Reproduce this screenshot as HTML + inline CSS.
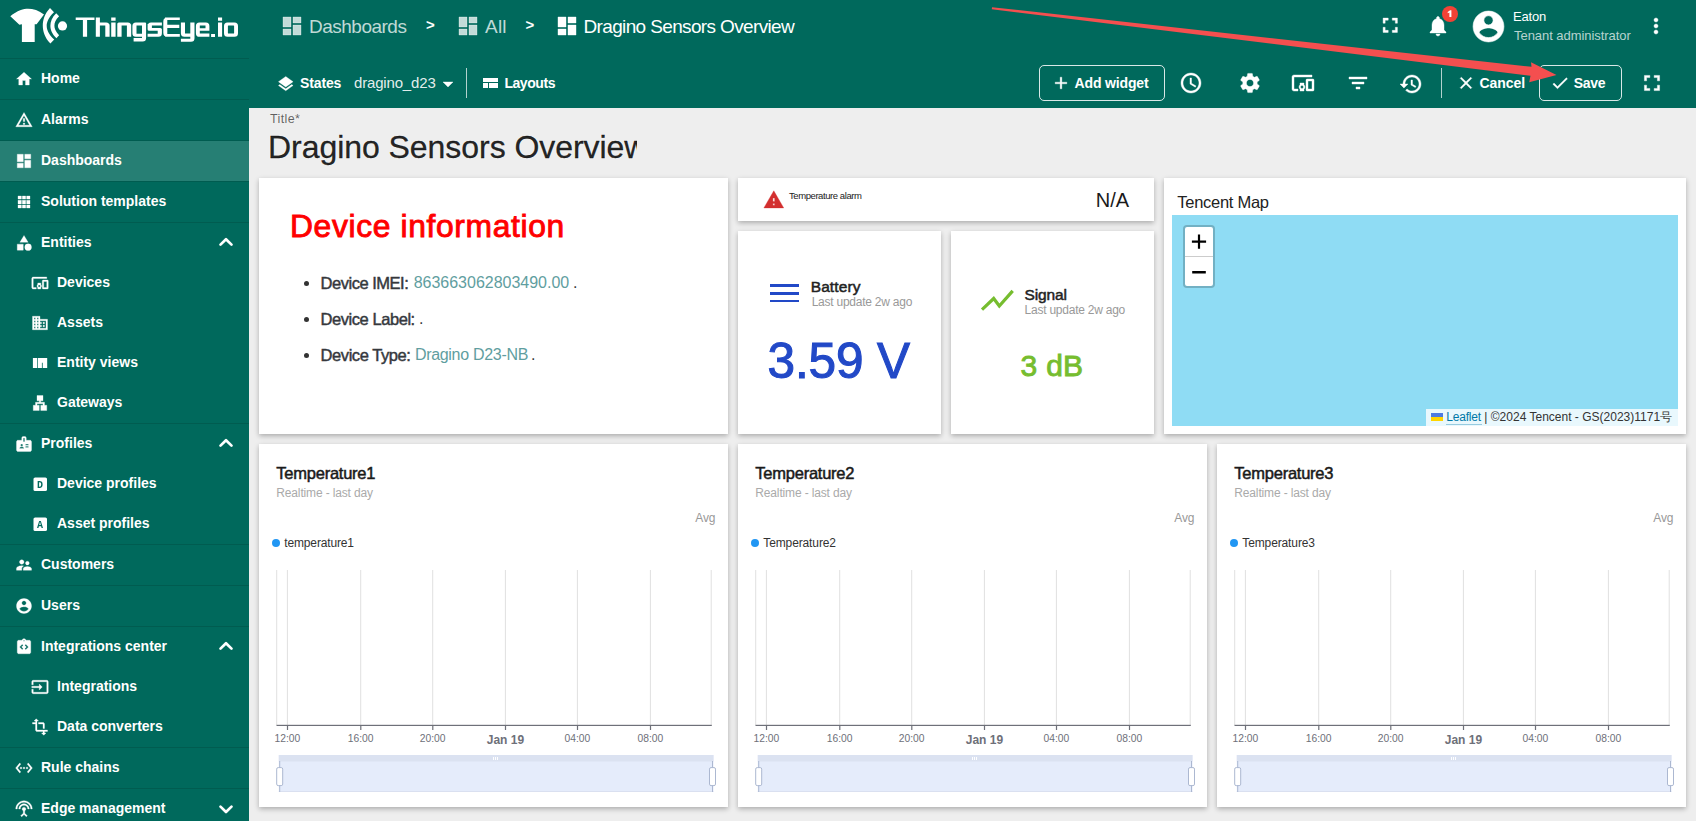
<!DOCTYPE html>
<html><head><meta charset="utf-8"><style>
html,body{margin:0;padding:0;width:1696px;height:821px;overflow:hidden;background:#eee}
body{position:relative;font-family:"Liberation Sans", sans-serif}
.t{position:absolute;white-space:nowrap;line-height:1}
.t.c{text-align:center}
.r{position:absolute;box-sizing:content-box}
.i{position:absolute;overflow:visible}
</style></head><body>
<div class="r" style="left:0px;top:0px;width:1696px;height:108px;background:#00695c;"></div>
<div class="r" style="left:0px;top:108px;width:249px;height:713px;background:#00695c;"></div>
<div class="r" style="left:249px;top:108px;width:1447px;height:713px;background:#eeeeee;"></div>
<svg class="i" style="left:8px;top:6px;width:62px;height:40px" viewBox="8 6 62 40">
<path fill="#fff" d="M10.3 16.3 C17 10.5 24 8.8 28 8.8 C33 8.8 39 10.5 44 14.6 L36.6 24.3 L34.7 24.3 L34.7 42.1 L21.9 42.1 L21.9 24.3 L19.4 24.8 Z"/>
<path fill="#fff" d="M50 8.1 L54 12.3 C48 18 46.7 23 46.7 25.8 C46.7 29 48 34 54.2 39.6 L50.4 43.6 C44.5 37.5 42.8 31 42.8 25.8 C42.8 20 44.8 13.8 50 8.1 Z"/>
<path fill="#fff" d="M56.2 13.3 L59.1 16.3 C55.5 19.8 54.4 23 54.4 25.8 C54.4 28.5 55.5 31.5 59.1 35.3 L56.4 38.2 C51.8 33.8 50.4 29.5 50.4 25.8 C50.4 21.8 52 17.3 56.2 13.3 Z"/>
<circle fill="#fff" cx="62.5" cy="25.9" r="4.6"/>
</svg>
<svg class="i" style="left:0;top:0;width:250px;height:58px" viewBox="0 0 250 58"><path fill="#fff" d="M75.70 17.40H94.50V20.10H75.70V17.40Z M82.90 19.90H87.10V36.85H82.90V19.90Z M95.80 17.40H99.90V36.85H95.80V17.40Z M99.50 22.50H106.10A3.5 3.5 0 0 1 109.60 26.00V25.40H99.50V22.50Z M105.30 24.50H109.60V36.85H105.30V24.50Z M111.20 17.40H115.60V20.80H111.20V17.40Z M111.20 22.50H115.60V36.85H111.20V22.50Z M118.80 22.50H127.70A3.5 3.5 0 0 1 131.20 26.00V25.40H117.30V24.00A1.5 1.5 0 0 1 118.80 22.50Z M117.30 23.50H121.60V36.85H117.30V23.50Z M126.90 24.50H131.20V36.85H126.90V24.50Z M135.90 22.50H145.10A1 1 0 0 1 146.10 23.50V36.85H135.90A3.5 3.5 0 0 1 132.40 33.35V26.00A3.5 3.5 0 0 1 135.90 22.50ZM136.50 25.40V33.70H142.00V25.40H136.50Z M142.00 24.50H146.10V38.10A3.5 3.5 0 0 1 142.60 41.60H142.00V24.50Z M133.60 37.90H144.00V41.60H133.60V37.90Z M151.10 22.50H161.90V25.40H147.60V26.00A3.5 3.5 0 0 1 151.10 22.50Z M147.60 24.00H151.90V30.70H149.10A1.5 1.5 0 0 1 147.60 29.20V24.00Z M149.50 27.90H160.40A1.5 1.5 0 0 1 161.90 29.40V30.70H149.50V27.90Z M157.70 29.00H161.90V33.35A3.5 3.5 0 0 1 158.40 36.85H157.70V29.00Z M147.60 33.80H159.50V36.85H147.60V33.80Z M167.30 17.40H167.30V36.85H167.30A4 4 0 0 1 163.30 32.85V21.40A4 4 0 0 1 167.30 17.40Z M165.00 17.40H179.80V20.10H165.00V17.40Z M165.00 24.70H179.30V27.90H165.00V24.70Z M165.00 33.90H179.80V36.85H165.00V33.90Z M180.90 22.50H185.00V36.85H184.40A3.5 3.5 0 0 1 180.90 33.35V22.50Z M183.00 33.50H192.00V36.85H183.00V33.50Z M190.30 22.50H194.50V38.30A3.5 3.5 0 0 1 191.00 41.80H190.30V22.50Z M180.90 38.70H192.00V41.80H180.90V38.70Z M199.40 22.50H205.90A3.5 3.5 0 0 1 209.40 26.00V30.80H195.90V26.00A3.5 3.5 0 0 1 199.40 22.50ZM199.80 25.40V28.20H205.50V25.40H199.80Z M195.90 29.00H199.80V36.85H199.40A3.5 3.5 0 0 1 195.90 33.35V29.00Z M197.50 33.40H209.40V36.85H197.50V33.40Z M211.10 34.10H215.00V37.05H211.10V34.10Z M218.00 17.40H222.10V20.80H218.00V17.40Z M218.00 22.50H222.10V36.85H218.00V22.50Z M227.50 22.50H234.50A3.5 3.5 0 0 1 238.00 26.00V33.35A3.5 3.5 0 0 1 234.50 36.85H227.50A3.5 3.5 0 0 1 224.00 33.35V26.00A3.5 3.5 0 0 1 227.50 22.50ZM227.90 26.00V33.00A0.5 0.5 0 0 0 228.40 33.50H233.60A0.5 0.5 0 0 0 234.10 33.00V26.00A0.5 0.5 0 0 0 233.60 25.50H228.40A0.5 0.5 0 0 0 227.90 26.00Z"/></svg>
<svg class="i" style="left:280.3px;top:14px;width:24px;height:24px;" viewBox="0 0 24 24"><path fill="rgba(255,255,255,0.76)" stroke="rgba(255,255,255,0.76)" stroke-width="0.4" d="M3 13h8V3H3v10zm0 8h8v-6H3v6zm10 0h8V11h-8v10zm0-18v6h8V3h-8z"/></svg>
<div class="t" style="left:309.00px;top:16.91px;font-size:19px;color:rgba(255,255,255,0.76);font-weight:400;letter-spacing:-0.506px;">Dashboards</div>
<div class="t" style="left:425.95px;top:17.30px;font-size:15px;color:#fff;font-weight:700;">&gt;</div>
<svg class="i" style="left:456px;top:14px;width:24px;height:24px;" viewBox="0 0 24 24"><path fill="rgba(255,255,255,0.76)" stroke="rgba(255,255,255,0.76)" stroke-width="0.4" d="M3 13h8V3H3v10zm0 8h8v-6H3v6zm10 0h8V11h-8v10zm0-18v6h8V3h-8z"/></svg>
<div class="t" style="left:485.00px;top:16.91px;font-size:19px;color:rgba(255,255,255,0.76);font-weight:400;letter-spacing:0.203px;">All</div>
<div class="t" style="left:525.45px;top:17.30px;font-size:15px;color:#fff;font-weight:700;">&gt;</div>
<svg class="i" style="left:555px;top:14px;width:24px;height:24px;" viewBox="0 0 24 24"><path fill="#fff" stroke="#fff" stroke-width="0.4" d="M3 13h8V3H3v10zm0 8h8v-6H3v6zm10 0h8V11h-8v10zm0-18v6h8V3h-8z"/></svg>
<div class="t" style="left:583.50px;top:16.91px;font-size:19px;color:#fff;font-weight:400;letter-spacing:-0.642px;">Dragino Sensors Overview</div>
<svg class="i" style="left:1377.8px;top:13.3px;width:24.5px;height:24.5px;" viewBox="0 0 24 24"><path fill="#fff" stroke="#fff" stroke-width="0.4" d="M7 14H5v5h5v-2H7v-3zm-2-4h2V7h3V5H5v5zm12 7h-3v2h5v-5h-2v3zM14 5v2h3v3h2V5h-5z"/></svg>
<svg class="i" style="left:1426px;top:14px;width:24px;height:24px;" viewBox="0 0 24 24"><path fill="#fff" stroke="#fff" stroke-width="0.4" d="M12 22c1.1 0 2-.9 2-2h-4c0 1.1.89 2 2 2zm6-6v-5c0-3.07-1.64-5.64-4.5-6.32V4c0-.83-.67-1.5-1.5-1.5s-1.5.67-1.5 1.5v.68C7.63 5.36 6 7.92 6 11v5l-2 2v1h16v-1l-2-2z"/></svg>
<div class="r" style="left:1442px;top:6px;width:16px;height:16px;border-radius:50%;background:#f24236"></div>
<svg class="i" style="left:0;top:0;width:1696px;height:58px" viewBox="0 0 1696 58"><path fill="#fff" d="M1447.7 11.9L1450.1 10.3H1451.4V17.1H1449.4V12.4L1447.7 13.3Z"/></svg>
<svg class="i" style="left:1469.5px;top:7.5px;width:37px;height:37px;" viewBox="0 0 24 24"><path fill="#fff" stroke="#fff" stroke-width="0.4" d="M12 2C6.48 2 2 6.48 2 12s4.48 10 10 10 10-4.48 10-10S17.52 2 12 2zm0 3c1.66 0 3 1.34 3 3s-1.34 3-3 3-3-1.34-3-3 1.34-3 3-3zm0 14.2c-2.5 0-4.71-1.28-6-3.22.03-1.99 4-3.08 6-3.08 1.99 0 5.97 1.09 6 3.08-1.29 1.94-3.5 3.22-6 3.22z"/></svg>
<div class="t" style="left:1513.00px;top:9.99px;font-size:13px;color:#fff;font-weight:400;letter-spacing:-0.186px;">Eaton</div>
<div class="t" style="left:1514.00px;top:28.99px;font-size:13px;color:rgba(255,255,255,0.72);font-weight:400;letter-spacing:-0.050px;">Tenant administrator</div>
<svg class="i" style="left:1644px;top:14px;width:24px;height:24px;" viewBox="0 0 24 24"><path fill="#fff" stroke="#fff" stroke-width="0.4" d="M12 8c1.1 0 2-.9 2-2s-.9-2-2-2-2 .9-2 2 .9 2 2 2zm0 2c-1.1 0-2 .9-2 2s.9 2 2 2 2-.9 2-2-.9-2-2-2zm0 6c-1.1 0-2 .9-2 2s.9 2 2 2 2-.9 2-2-.9-2-2-2z"/></svg>
<svg class="i" style="left:276px;top:74.6px;width:19.5px;height:19.5px;transform:scaleY(0.92);transform-origin:50% 0" viewBox="0 0 24 24"><path fill="#fff" stroke="#fff" stroke-width="0.4" d="M11.99 18.54l-7.37-5.73L3 14.07l9 7 9-7-1.63-1.27-7.38 5.74zM12 16l7.36-5.73L21 9l-9-7-9 7 1.63 1.27L12 16z"/></svg>
<div class="t" style="left:300.00px;top:76.14px;font-size:14px;color:#fff;font-weight:700;letter-spacing:-0.127px;">States</div>
<div class="t" style="left:354.00px;top:75.30px;font-size:15px;color:rgba(255,255,255,0.9);font-weight:400;letter-spacing:-0.167px;">dragino_d23</div>
<svg class="i" style="left:436.4px;top:71.8px;width:24px;height:24px;" viewBox="0 0 24 24"><path fill="#fff" stroke="#fff" stroke-width="0.4" d="M7 10l5 5 5-5z"/></svg>
<div class="r" style="left:466px;top:68px;width:1px;height:30px;background:rgba(255,255,255,0.7);"></div>
<div class="r" style="left:483px;top:78px;width:15px;height:3.8px;background:#fff;"></div>
<div class="r" style="left:483px;top:83.2px;width:5px;height:4.7px;background:#fff;"></div>
<div class="r" style="left:488.8px;top:83.2px;width:9.2px;height:4.7px;background:#fff;"></div>
<div class="t" style="left:504.40px;top:76.14px;font-size:14px;color:#fff;font-weight:700;letter-spacing:-0.432px;">Layouts</div>
<div class="r" style="left:1039px;top:65px;width:124px;height:34px;border:1px solid rgba(255,255,255,0.85);border-radius:5px"></div>
<svg class="i" style="left:1050.5px;top:73px;width:20px;height:20px;" viewBox="0 0 24 24"><path fill="#fff" stroke="#fff" stroke-width="0.4" d="M19 13h-6v6h-2v-6H5v-2h6V5h2v6h6v2z"/></svg>
<div class="t" style="left:1074.60px;top:76.14px;font-size:14px;color:#fff;font-weight:700;letter-spacing:-0.164px;">Add widget</div>
<svg class="i" style="left:1179.3px;top:71px;width:24px;height:24px;" viewBox="0 0 24 24"><path fill="#fff" stroke="#fff" stroke-width="0.4" d="M11.99 2C6.47 2 2 6.48 2 12s4.47 10 9.99 10C17.52 22 22 17.52 22 12S17.52 2 11.99 2zM12 20c-4.42 0-8-3.58-8-8s3.58-8 8-8 8 3.58 8 8-3.58 8-8 8zm.5-13H11v6l5.25 3.15.75-1.23-4.5-2.67z"/></svg>
<svg class="i" style="left:1237.5px;top:71px;width:24px;height:24px;" viewBox="0 0 24 24"><path fill="#fff" stroke="#fff" stroke-width="0.4" d="M19.14 12.94c.04-.3.06-.61.06-.94 0-.32-.02-.64-.07-.94l2.03-1.58c.18-.14.23-.41.12-.61l-1.92-3.32c-.12-.22-.37-.29-.59-.22l-2.39.96c-.5-.38-1.03-.7-1.62-.94l-.36-2.54c-.04-.24-.24-.41-.48-.41h-3.84c-.24 0-.43.17-.47.41l-.36 2.54c-.59.24-1.13.57-1.62.94l-2.39-.96c-.22-.08-.47 0-.59.22L2.74 8.87c-.12.21-.08.47.12.61l2.03 1.58c-.05.3-.09.63-.09.94s.02.64.07.94l-2.03 1.58c-.18.14-.23.41-.12.61l1.92 3.32c.12.22.37.29.59.22l2.39-.96c.5.38 1.03.7 1.62.94l.36 2.54c.05.24.24.41.48.41h3.84c.24 0 .44-.17.47-.41l.36-2.54c.59-.24 1.13-.56 1.62-.94l2.39.96c.22.08.47 0 .59-.22l1.92-3.32c.12-.22.07-.47-.12-.61l-2.01-1.58zM12 15.6c-1.98 0-3.6-1.62-3.6-3.6s1.62-3.6 3.6-3.6 3.6 1.62 3.6 3.6-1.62 3.6-3.6 3.6z"/></svg>
<svg class="i" style="left:1291px;top:71px;width:24px;height:24px;" viewBox="0 0 24 24"><path fill="#fff" stroke="#fff" stroke-width="0.4" d="M3 6h18V4H3c-1.1 0-2 .9-2 2v12c0 1.1.9 2 2 2h4v-2H3V6zm10 6H9v1.78c-.61.55-1 1.33-1 2.22s.39 1.67 1 2.22V20h4v-1.78c.61-.55 1-1.34 1-2.22s-.39-1.67-1-2.22V12zm-2 5.5c-.83 0-1.5-.67-1.5-1.5s.67-1.5 1.5-1.5 1.5.67 1.5 1.5-.67 1.5-1.5 1.5zM22 8h-6c-.5 0-1 .5-1 1v10c0 .5.5 1 1 1h6c.5 0 1-.5 1-1V9c0-.5-.5-1-1-1zm-1 10h-4v-8h4v8z"/></svg>
<svg class="i" style="left:1345.5px;top:71px;width:24px;height:24px;" viewBox="0 0 24 24"><path fill="#fff" stroke="#fff" stroke-width="0.4" d="M10 18h4v-2h-4v2zM3 6v2h18V6H3zm3 7h12v-2H6v2z"/></svg>
<svg class="i" style="left:1398.8px;top:71.5px;width:24px;height:24px;" viewBox="0 0 24 24"><path fill="#fff" stroke="#fff" stroke-width="0.4" d="M13 3c-4.97 0-9 4.03-9 9H1l3.89 3.89.07.14L9 12H6c0-3.87 3.13-7 7-7s7 3.13 7 7-3.13 7-7 7c-1.93 0-3.68-.79-4.94-2.06l-1.42 1.42C8.27 19.99 10.51 21 13 21c4.97 0 9-4.03 9-9s-4.03-9-9-9zm-1 5v5l4.28 2.54.72-1.21-3.5-2.08V8H12z"/></svg>
<div class="r" style="left:1441px;top:68px;width:1px;height:30px;background:rgba(255,255,255,0.7);"></div>
<svg class="i" style="left:1455.5px;top:73px;width:20px;height:20px;" viewBox="0 0 24 24"><path fill="#fff" stroke="#fff" stroke-width="0.4" d="M19 6.41L17.59 5 12 10.59 6.41 5 5 6.41 10.59 12 5 17.59 6.41 19 12 13.41 17.59 19 19 17.59 13.41 12z"/></svg>
<div class="t" style="left:1479.50px;top:76.14px;font-size:14px;color:#fff;font-weight:700;letter-spacing:-0.064px;">Cancel</div>
<div class="r" style="left:1539px;top:65px;width:81px;height:34px;border:1px solid rgba(255,255,255,0.85);border-radius:5px"></div>
<svg class="i" style="left:1550px;top:73px;width:20px;height:20px;" viewBox="0 0 24 24"><path fill="#fff" stroke="#fff" stroke-width="0.4" d="M9 16.17L4.83 12l-1.42 1.41L9 19 21 7l-1.41-1.41z"/></svg>
<div class="t" style="left:1573.80px;top:76.14px;font-size:14px;color:#fff;font-weight:700;letter-spacing:-0.303px;">Save</div>
<svg class="i" style="left:1639px;top:70px;width:26px;height:26px;" viewBox="0 0 24 24"><path fill="#fff" stroke="#fff" stroke-width="0.4" d="M7 14H5v5h5v-2H7v-3zm-2-4h2V7h3V5H5v5zm12 7h-3v2h5v-5h-2v3zM14 5v2h3v3h2V5h-5z"/></svg>
<div class="t" style="left:270.00px;top:112.61px;font-size:12.5px;color:rgba(0,0,0,0.6);font-weight:400;letter-spacing:0.370px;">Title*</div>
<div class="r" style="left:260px;top:122px;width:377px;height:48px;overflow:hidden">
<div class="t" style="left:8.00px;top:8.50px;font-size:32px;color:rgba(0,0,0,0.87);font-weight:400;-webkit-text-stroke:0.3px rgba(0,0,0,0.87);letter-spacing:-0.05px;">Dragino Sensors Overview</div>
</div>
<div class="r" style="left:259px;top:178px;width:469px;height:256px;background:#fff;box-shadow:0 2px 5px rgba(0,0,0,0.28);"></div>
<div class="r" style="left:738px;top:178px;width:416px;height:43px;background:#fff;box-shadow:0 2px 5px rgba(0,0,0,0.28);"></div>
<div class="r" style="left:738px;top:231px;width:203px;height:203px;background:#fff;box-shadow:0 2px 5px rgba(0,0,0,0.28);"></div>
<div class="r" style="left:951px;top:231px;width:203px;height:203px;background:#fff;box-shadow:0 2px 5px rgba(0,0,0,0.28);"></div>
<div class="r" style="left:1164px;top:178px;width:522px;height:256px;background:#fff;box-shadow:0 2px 5px rgba(0,0,0,0.28);"></div>
<div class="r" style="left:259px;top:444px;width:469px;height:363px;background:#fff;box-shadow:0 2px 5px rgba(0,0,0,0.28);"></div>
<div class="r" style="left:738px;top:444px;width:469px;height:363px;background:#fff;box-shadow:0 2px 5px rgba(0,0,0,0.28);"></div>
<div class="r" style="left:1217px;top:444px;width:469px;height:363px;background:#fff;box-shadow:0 2px 5px rgba(0,0,0,0.28);"></div>
<div class="t" style="left:290.00px;top:211.27px;font-size:31.8px;color:#ff0000;font-weight:400;letter-spacing:0.639px;-webkit-text-stroke:0.9px #ff0000;">Device information</div>
<div class="r" style="left:303.5px;top:280.8px;width:5px;height:5px;border-radius:50%;background:#333"></div>
<div class="r" style="left:303.5px;top:316.8px;width:5px;height:5px;border-radius:50%;background:#333"></div>
<div class="r" style="left:303.5px;top:352.8px;width:5px;height:5px;border-radius:50%;background:#333"></div>

<div class="t" style="left:320.60px;top:274.82px;font-size:16.5px;color:#35383d;font-weight:400;letter-spacing:-0.485px;-webkit-text-stroke:0.45px #35383d;">Device IMEI:</div>
<div class="t" style="left:413.70px;top:275.25px;font-size:16px;color:#5f9ea0;font-weight:400;letter-spacing:-0.013px;">863663062803490.00</div>
<div class="t" style="left:573.00px;top:275.25px;font-size:16px;color:#35383d;font-weight:400;">.</div>
<div class="t" style="left:320.60px;top:311.02px;font-size:16.5px;color:#35383d;font-weight:400;letter-spacing:-0.449px;-webkit-text-stroke:0.45px #35383d;">Device Label:</div>
<div class="t" style="left:419.00px;top:311.45px;font-size:16px;color:#35383d;font-weight:400;">.</div>
<div class="t" style="left:320.60px;top:347.02px;font-size:16.5px;color:#35383d;font-weight:400;letter-spacing:-0.435px;-webkit-text-stroke:0.45px #35383d;">Device Type:</div>
<div class="t" style="left:414.90px;top:347.45px;font-size:16px;color:#5f9ea0;font-weight:400;letter-spacing:-0.301px;">Dragino D23-NB</div>
<div class="t" style="left:531.00px;top:347.45px;font-size:16px;color:#35383d;font-weight:400;">.</div>
<svg class="i" style="left:762.7px;top:189.2px;width:21.6px;height:21.6px;" viewBox="0 0 24 24"><path fill="#d32f2f" stroke="#d32f2f" stroke-width="0.4" d="M1 21h22L12 2 1 21zm12-3h-2v-2h2v2zm0-4h-2v-4h2v4z"/></svg>
<div class="t" style="left:789.00px;top:190.75px;font-size:9.5px;color:#222;font-weight:400;letter-spacing:-0.426px;">Temperature alarm</div>
<div class="t" style="left:1095.80px;top:189.86px;font-size:20px;color:#1a1a1a;font-weight:400;">N/A</div>
<div class="r" style="left:769.6px;top:284.4px;width:29.8px;height:2.6px;background:#2249c7;"></div>
<div class="r" style="left:769.6px;top:292.1px;width:29.8px;height:2.6px;background:#2249c7;"></div>
<div class="r" style="left:769.6px;top:299.9px;width:29.8px;height:2.6px;background:#2249c7;"></div>
<div class="t" style="left:810.70px;top:279.37px;font-size:15.5px;color:#222;font-weight:400;letter-spacing:0.108px;-webkit-text-stroke:0.5px #222;">Battery</div>
<div class="t" style="left:811.70px;top:296.24px;font-size:12px;color:#999;font-weight:400;letter-spacing:-0.240px;">Last update 2w ago</div>
<div class="t" style="left:767.50px;top:336.27px;font-size:49.5px;color:#2249c7;font-weight:400;letter-spacing:-0.119px;-webkit-text-stroke:1.1px #2249c7;">3.59 V</div>
<svg class="i" style="left:970px;top:280px;width:50px;height:40px" viewBox="970 280 50 40"><polyline points="982,309.6 993.7,298.5 999.3,306 1012.7,290.9" fill="none" stroke="#76bd2f" stroke-width="3.2" stroke-linejoin="miter"/></svg>
<div class="t" style="left:1024.60px;top:287.17px;font-size:15.5px;color:#222;font-weight:400;letter-spacing:-0.129px;-webkit-text-stroke:0.5px #222;">Signal</div>
<div class="t" style="left:1024.60px;top:304.44px;font-size:12px;color:#999;font-weight:400;letter-spacing:-0.240px;">Last update 2w ago</div>
<div class="t" style="left:1020.60px;top:351.09px;font-size:30px;color:#76bd2f;font-weight:400;letter-spacing:0.265px;-webkit-text-stroke:0.9px #76bd2f;">3 dB</div>
<div class="t" style="left:1177.30px;top:193.82px;font-size:16.5px;color:#222;font-weight:400;letter-spacing:-0.280px;">Tencent Map</div>
<div class="r" style="left:1172px;top:215px;width:506px;height:211px;background:#8fdcf4;"></div>
<div class="r" style="left:1183px;top:225px;width:28px;height:59px;border:2px solid rgba(0,0,0,0.2);border-radius:4px;background:#fff;background-clip:padding-box"></div>
<div class="r" style="left:1185px;top:256px;width:28px;height:1px;background:#ccc;"></div>
<svg class="i" style="left:1185px;top:227px;width:28px;height:59px" viewBox="0 0 28 59"><path d="M12.9 7.5h2.2v6.1h6v2.1h-6v6.1h-2.2v-6.1h-6v-2.1h6z M7.2 44.1h13.6v2.3h-13.6z" fill="#000"/></svg>
<div class="r" style="left:1426px;top:409px;width:252px;height:17px;background:rgba(255,255,255,0.8);"></div>
<div class="r" style="left:1431px;top:413px;width:12px;height:4px;background:#4C7BE1;"></div>
<div class="r" style="left:1431px;top:417px;width:12px;height:4px;background:#FFD500;"></div>
<div class="t" style="left:1446.30px;top:411.34px;font-size:12px;color:#0078a8;font-weight:400;letter-spacing:-0.199px;">Leaflet</div>
<div class="r" style="left:1446px;top:424px;width:36px;height:1px;background:rgba(0,120,168,0.35);"></div>
<div class="t" style="left:1484.30px;top:411.34px;font-size:12px;color:#333;font-weight:400;letter-spacing:0.005px;">| ©2024 Tencent - GS(2023)1171号</div>
<div class="t" style="left:276.30px;top:464.82px;font-size:16.5px;color:#1a1a1a;font-weight:400;letter-spacing:-0.239px;-webkit-text-stroke:0.5px #1a1a1a;">Temperature1</div>
<div class="t" style="left:276.30px;top:486.54px;font-size:12px;color:#aaa;font-weight:400;letter-spacing:-0.148px;">Realtime - last day</div>
<div class="t" style="left:695.30px;top:511.84px;font-size:12px;color:#999;font-weight:400;letter-spacing:-0.144px;">Avg</div>
<div class="r" style="left:272px;top:539px;width:8px;height:8px;border-radius:50%;background:#2196f3"></div>
<div class="t" style="left:284.30px;top:536.84px;font-size:12px;color:#333;font-weight:400;letter-spacing:-0.154px;">temperature1</div>
<svg class="i" style="left:259px;top:560px;width:469px;height:240px" viewBox="0 0 469 240"><rect x="17.2" y="10" width="1" height="155" fill="#e0e0e0"/><rect x="27.9" y="10" width="1" height="155" fill="#e0e0e0"/><rect x="101.2" y="10" width="1" height="155" fill="#e0e0e0"/><rect x="173.2" y="10" width="1" height="155" fill="#e0e0e0"/><rect x="245.9" y="10" width="1" height="155" fill="#e0e0e0"/><rect x="317.9" y="10" width="1" height="155" fill="#e0e0e0"/><rect x="390.9" y="10" width="1" height="155" fill="#e0e0e0"/><rect x="451.7" y="10" width="1" height="155" fill="#e0e0e0"/><rect x="17.5" y="164.8" width="435.3" height="1.2" fill="#6e7079"/><rect x="27.9" y="165" width="1.2" height="5" fill="#6e7079"/><rect x="101.2" y="165" width="1.2" height="5" fill="#6e7079"/><rect x="173.2" y="165" width="1.2" height="5" fill="#6e7079"/><rect x="245.9" y="165" width="1.2" height="5" fill="#6e7079"/><rect x="317.9" y="165" width="1.2" height="5" fill="#6e7079"/><rect x="390.9" y="165" width="1.2" height="5" fill="#6e7079"/><rect x="19.8" y="195" width="434.7" height="36.8" fill="#e5ecfb"/><rect x="19.8" y="195" width="434.7" height="6.5" fill="#dbe2f1"/><rect x="19.8" y="231" width="434.7" height="0.8" fill="#d6ddee"/><rect x="20.2" y="201" width="1" height="31" fill="#acb8d1"/><rect x="17.7" y="207.6" width="6" height="18" rx="1.5" fill="#fff" stroke="#acb8d1" stroke-width="1"/><rect x="453.0" y="201" width="1" height="31" fill="#acb8d1"/><rect x="450.5" y="207.6" width="6" height="18" rx="1.5" fill="#fff" stroke="#acb8d1" stroke-width="1"/><rect x="234" y="197" width="1" height="3" fill="#fff"/><rect x="236" y="197" width="1" height="3" fill="#fff"/><rect x="238" y="197" width="1" height="3" fill="#fff"/></svg>
<div class="t c" style="left:247.4px;top:734.48px;width:80px;font-size:10.3px;color:#6e7079">12:00</div>
<div class="t c" style="left:320.7px;top:734.48px;width:80px;font-size:10.3px;color:#6e7079">16:00</div>
<div class="t c" style="left:392.7px;top:734.48px;width:80px;font-size:10.3px;color:#6e7079">20:00</div>
<div class="t c" style="left:537.4px;top:734.48px;width:80px;font-size:10.3px;color:#6e7079">04:00</div>
<div class="t c" style="left:610.4px;top:734.48px;width:80px;font-size:10.3px;color:#6e7079">08:00</div>
<div class="t c" style="left:465.4px;top:734.24px;width:80px;font-size:12px;font-weight:700;color:#6e7079">Jan 19</div>
<div class="t" style="left:755.30px;top:464.82px;font-size:16.5px;color:#1a1a1a;font-weight:400;letter-spacing:-0.239px;-webkit-text-stroke:0.5px #1a1a1a;">Temperature2</div>
<div class="t" style="left:755.30px;top:486.54px;font-size:12px;color:#aaa;font-weight:400;letter-spacing:-0.148px;">Realtime - last day</div>
<div class="t" style="left:1174.30px;top:511.84px;font-size:12px;color:#999;font-weight:400;letter-spacing:-0.144px;">Avg</div>
<div class="r" style="left:751px;top:539px;width:8px;height:8px;border-radius:50%;background:#2196f3"></div>
<div class="t" style="left:763.30px;top:536.84px;font-size:12px;color:#333;font-weight:400;letter-spacing:-0.124px;">Temperature2</div>
<svg class="i" style="left:738px;top:560px;width:469px;height:240px" viewBox="0 0 469 240"><rect x="17.2" y="10" width="1" height="155" fill="#e0e0e0"/><rect x="27.9" y="10" width="1" height="155" fill="#e0e0e0"/><rect x="101.2" y="10" width="1" height="155" fill="#e0e0e0"/><rect x="173.2" y="10" width="1" height="155" fill="#e0e0e0"/><rect x="245.9" y="10" width="1" height="155" fill="#e0e0e0"/><rect x="317.9" y="10" width="1" height="155" fill="#e0e0e0"/><rect x="390.9" y="10" width="1" height="155" fill="#e0e0e0"/><rect x="451.7" y="10" width="1" height="155" fill="#e0e0e0"/><rect x="17.5" y="164.8" width="435.3" height="1.2" fill="#6e7079"/><rect x="27.9" y="165" width="1.2" height="5" fill="#6e7079"/><rect x="101.2" y="165" width="1.2" height="5" fill="#6e7079"/><rect x="173.2" y="165" width="1.2" height="5" fill="#6e7079"/><rect x="245.9" y="165" width="1.2" height="5" fill="#6e7079"/><rect x="317.9" y="165" width="1.2" height="5" fill="#6e7079"/><rect x="390.9" y="165" width="1.2" height="5" fill="#6e7079"/><rect x="19.8" y="195" width="434.7" height="36.8" fill="#e5ecfb"/><rect x="19.8" y="195" width="434.7" height="6.5" fill="#dbe2f1"/><rect x="19.8" y="231" width="434.7" height="0.8" fill="#d6ddee"/><rect x="20.2" y="201" width="1" height="31" fill="#acb8d1"/><rect x="17.7" y="207.6" width="6" height="18" rx="1.5" fill="#fff" stroke="#acb8d1" stroke-width="1"/><rect x="453.0" y="201" width="1" height="31" fill="#acb8d1"/><rect x="450.5" y="207.6" width="6" height="18" rx="1.5" fill="#fff" stroke="#acb8d1" stroke-width="1"/><rect x="234" y="197" width="1" height="3" fill="#fff"/><rect x="236" y="197" width="1" height="3" fill="#fff"/><rect x="238" y="197" width="1" height="3" fill="#fff"/></svg>
<div class="t c" style="left:726.4px;top:734.48px;width:80px;font-size:10.3px;color:#6e7079">12:00</div>
<div class="t c" style="left:799.7px;top:734.48px;width:80px;font-size:10.3px;color:#6e7079">16:00</div>
<div class="t c" style="left:871.7px;top:734.48px;width:80px;font-size:10.3px;color:#6e7079">20:00</div>
<div class="t c" style="left:1016.4px;top:734.48px;width:80px;font-size:10.3px;color:#6e7079">04:00</div>
<div class="t c" style="left:1089.4px;top:734.48px;width:80px;font-size:10.3px;color:#6e7079">08:00</div>
<div class="t c" style="left:944.4px;top:734.24px;width:80px;font-size:12px;font-weight:700;color:#6e7079">Jan 19</div>
<div class="t" style="left:1234.30px;top:464.82px;font-size:16.5px;color:#1a1a1a;font-weight:400;letter-spacing:-0.239px;-webkit-text-stroke:0.5px #1a1a1a;">Temperature3</div>
<div class="t" style="left:1234.30px;top:486.54px;font-size:12px;color:#aaa;font-weight:400;letter-spacing:-0.148px;">Realtime - last day</div>
<div class="t" style="left:1653.30px;top:511.84px;font-size:12px;color:#999;font-weight:400;letter-spacing:-0.144px;">Avg</div>
<div class="r" style="left:1230px;top:539px;width:8px;height:8px;border-radius:50%;background:#2196f3"></div>
<div class="t" style="left:1242.30px;top:536.84px;font-size:12px;color:#333;font-weight:400;letter-spacing:-0.124px;">Temperature3</div>
<svg class="i" style="left:1217px;top:560px;width:469px;height:240px" viewBox="0 0 469 240"><rect x="17.2" y="10" width="1" height="155" fill="#e0e0e0"/><rect x="27.9" y="10" width="1" height="155" fill="#e0e0e0"/><rect x="101.2" y="10" width="1" height="155" fill="#e0e0e0"/><rect x="173.2" y="10" width="1" height="155" fill="#e0e0e0"/><rect x="245.9" y="10" width="1" height="155" fill="#e0e0e0"/><rect x="317.9" y="10" width="1" height="155" fill="#e0e0e0"/><rect x="390.9" y="10" width="1" height="155" fill="#e0e0e0"/><rect x="451.7" y="10" width="1" height="155" fill="#e0e0e0"/><rect x="17.5" y="164.8" width="435.3" height="1.2" fill="#6e7079"/><rect x="27.9" y="165" width="1.2" height="5" fill="#6e7079"/><rect x="101.2" y="165" width="1.2" height="5" fill="#6e7079"/><rect x="173.2" y="165" width="1.2" height="5" fill="#6e7079"/><rect x="245.9" y="165" width="1.2" height="5" fill="#6e7079"/><rect x="317.9" y="165" width="1.2" height="5" fill="#6e7079"/><rect x="390.9" y="165" width="1.2" height="5" fill="#6e7079"/><rect x="19.8" y="195" width="434.7" height="36.8" fill="#e5ecfb"/><rect x="19.8" y="195" width="434.7" height="6.5" fill="#dbe2f1"/><rect x="19.8" y="231" width="434.7" height="0.8" fill="#d6ddee"/><rect x="20.2" y="201" width="1" height="31" fill="#acb8d1"/><rect x="17.7" y="207.6" width="6" height="18" rx="1.5" fill="#fff" stroke="#acb8d1" stroke-width="1"/><rect x="453.0" y="201" width="1" height="31" fill="#acb8d1"/><rect x="450.5" y="207.6" width="6" height="18" rx="1.5" fill="#fff" stroke="#acb8d1" stroke-width="1"/><rect x="234" y="197" width="1" height="3" fill="#fff"/><rect x="236" y="197" width="1" height="3" fill="#fff"/><rect x="238" y="197" width="1" height="3" fill="#fff"/></svg>
<div class="t c" style="left:1205.4px;top:734.48px;width:80px;font-size:10.3px;color:#6e7079">12:00</div>
<div class="t c" style="left:1278.7px;top:734.48px;width:80px;font-size:10.3px;color:#6e7079">16:00</div>
<div class="t c" style="left:1350.7px;top:734.48px;width:80px;font-size:10.3px;color:#6e7079">20:00</div>
<div class="t c" style="left:1495.4px;top:734.48px;width:80px;font-size:10.3px;color:#6e7079">04:00</div>
<div class="t c" style="left:1568.4px;top:734.48px;width:80px;font-size:10.3px;color:#6e7079">08:00</div>
<div class="t c" style="left:1423.4px;top:734.24px;width:80px;font-size:12px;font-weight:700;color:#6e7079">Jan 19</div>
<div class="r" style="left:0px;top:58px;width:249px;height:1px;background:rgba(0,0,0,0.12);"></div>
<div class="r" style="left:0px;top:99px;width:249px;height:1px;background:rgba(0,0,0,0.12);"></div>
<svg class="i" style="left:14.5px;top:70px;width:18px;height:18px;" viewBox="0 0 24 24"><path fill="#fff" stroke="#fff" stroke-width="0.4" d="M10 20v-6h4v6h5v-8h3L12 3 2 12h3v8z"/></svg>
<div class="t" style="left:41.00px;top:71.14px;font-size:14px;color:#fff;font-weight:700;">Home</div>
<div class="r" style="left:0px;top:140px;width:249px;height:1px;background:rgba(0,0,0,0.12);"></div>
<svg class="i" style="left:14.5px;top:111px;width:18px;height:18px;" viewBox="0 0 24 24"><path fill="#fff" stroke="#fff" stroke-width="0.4" d="M12 5.99L19.53 19H4.47L12 5.99M12 2L1 21h22L12 2zm1 14h-2v2h2v-2zm0-6h-2v4h2v-4z"/></svg>
<div class="t" style="left:41.00px;top:112.14px;font-size:14px;color:#fff;font-weight:700;">Alarms</div>
<div class="r" style="left:0px;top:141px;width:249px;height:40px;background:rgba(255,255,255,0.15);"></div>
<div class="r" style="left:0px;top:181px;width:249px;height:1px;background:rgba(0,0,0,0.12);"></div>
<svg class="i" style="left:14.5px;top:152px;width:18px;height:18px;" viewBox="0 0 24 24"><path fill="#fff" stroke="#fff" stroke-width="0.4" d="M3 13h8V3H3v10zm0 8h8v-6H3v6zm10 0h8V11h-8v10zm0-18v6h8V3h-8z"/></svg>
<div class="t" style="left:41.00px;top:153.14px;font-size:14px;color:#fff;font-weight:700;">Dashboards</div>
<div class="r" style="left:0px;top:222px;width:249px;height:1px;background:rgba(0,0,0,0.12);"></div>
<svg class="i" style="left:14.5px;top:193px;width:18px;height:18px;" viewBox="0 0 24 24"><path fill="#fff" stroke="#fff" stroke-width="0.4" d="M4 4h4.5v4H4zM9.75 4h4.5v4h-4.5zM15.5 4H20v4h-4.5zM4 9.5h4.5v5H4zM9.75 9.5h4.5v5h-4.5zM15.5 9.5H20v5h-4.5zM4 16h4.5v4H4zM9.75 16h4.5v4h-4.5zM15.5 16H20v4h-4.5z"/></svg>
<div class="t" style="left:41.00px;top:194.14px;font-size:14px;color:#fff;font-weight:700;">Solution templates</div>
<svg class="i" style="left:14.5px;top:234px;width:18px;height:18px;" viewBox="0 0 24 24"><path fill="#fff" stroke="#fff" stroke-width="0.4" d="M12 2l-5.5 9h11zM17.5 13a4.5 4.5 0 1 0 0 9a4.5 4.5 0 1 0 0-9zM3 13.5h8v8H3z"/></svg>
<div class="t" style="left:41.00px;top:235.14px;font-size:14px;color:#fff;font-weight:700;">Entities</div>
<svg class="i" style="left:0;top:0;width:249px;height:821px" viewBox="0 0 249 821"><polyline points="220.5,244.6 226,239.2 231.5,244.6" fill="none" stroke="#fff" stroke-width="2.7" stroke-linecap="round" stroke-linejoin="round"/></svg>
<svg class="i" style="left:30.5px;top:274px;width:18px;height:18px;" viewBox="0 0 24 24"><path fill="#fff" stroke="#fff" stroke-width="0.4" d="M3 6h18V4H3c-1.1 0-2 .9-2 2v12c0 1.1.9 2 2 2h4v-2H3V6zm10 6H9v1.78c-.61.55-1 1.33-1 2.22s.39 1.67 1 2.22V20h4v-1.78c.61-.55 1-1.34 1-2.22s-.39-1.67-1-2.22V12zm-2 5.5c-.83 0-1.5-.67-1.5-1.5s.67-1.5 1.5-1.5 1.5.67 1.5 1.5-.67 1.5-1.5 1.5zM22 8h-6c-.5 0-1 .5-1 1v10c0 .5.5 1 1 1h6c.5 0 1-.5 1-1V9c0-.5-.5-1-1-1zm-1 10h-4v-8h4v8z"/></svg>
<div class="t" style="left:57.00px;top:275.14px;font-size:14px;color:#fff;font-weight:700;">Devices</div>
<svg class="i" style="left:30.5px;top:314px;width:18px;height:18px;" viewBox="0 0 24 24"><path fill="#fff" stroke="#fff" stroke-width="0.4" d="M12 7V3H2v18h20V7H12zM6 19H4v-2h2v2zm0-4H4v-2h2v2zm0-4H4V9h2v2zm0-4H4V5h2v2zm4 12H8v-2h2v2zm0-4H8v-2h2v2zm0-4H8V9h2v2zm0-4H8V5h2v2zm10 12h-8v-2h2v-2h-2v-2h2v-2h-2V9h8v10zm-2-8h-2v2h2v-2zm0 4h-2v2h2v-2z"/></svg>
<div class="t" style="left:57.00px;top:315.14px;font-size:14px;color:#fff;font-weight:700;">Assets</div>
<svg class="i" style="left:0;top:0;width:249px;height:821px" viewBox="0 0 249 821"><path fill="#fff" d="M32.9 358h4.2v9.9h-4.2zM37.8 358h9.4v9.9h-4.5v-5.2h-0.8v5.2h-4.1z"/></svg>
<div class="t" style="left:57.00px;top:355.14px;font-size:14px;color:#fff;font-weight:700;">Entity views</div>
<div class="r" style="left:0px;top:423px;width:249px;height:1px;background:rgba(0,0,0,0.12);"></div>
<svg class="i" style="left:30.5px;top:394px;width:18px;height:18px;" viewBox="0 0 24 24"><path fill="#fff" stroke="#fff" stroke-width="0.4" d="M13 22h8v-7h-3v-4h-5V9h3V2H8v7h3v2H6v4H3v7h8v-7H8v-2h8v2h-3z"/></svg>
<div class="t" style="left:57.00px;top:395.14px;font-size:14px;color:#fff;font-weight:700;">Gateways</div>
<svg class="i" style="left:14.5px;top:435px;width:18px;height:18px;" viewBox="0 0 24 24"><path fill="#fff" stroke="#fff" stroke-width="0.4" d="M20 7h-5V4c0-1.1-.9-2-2-2h-2c-1.1 0-2 .9-2 2v3H4c-1.1 0-2 .9-2 2v11c0 1.1.9 2 2 2h16c1.1 0 2-.9 2-2V9c0-1.1-.9-2-2-2zM9 12c.83 0 1.5.67 1.5 1.5S9.83 15 9 15s-1.5-.67-1.5-1.5S8.17 12 9 12zm3 6H6v-.43c0-.6.36-1.15.92-1.39.64-.28 1.34-.43 2.08-.43s1.44.15 2.08.43c.55.24.92.78.92 1.39V18zm1-9h-2V4h2v5zm5 7.5h-4V15h4v1.5zm0-3h-4V12h4v1.5z"/></svg>
<div class="t" style="left:41.00px;top:436.14px;font-size:14px;color:#fff;font-weight:700;">Profiles</div>
<svg class="i" style="left:0;top:0;width:249px;height:821px" viewBox="0 0 249 821"><polyline points="220.5,445.6 226,440.2 231.5,445.6" fill="none" stroke="#fff" stroke-width="2.7" stroke-linecap="round" stroke-linejoin="round"/></svg>
<svg class="i" style="left:30.5px;top:475px;width:18px;height:18px" viewBox="0 0 18 18"><defs><mask id="mD"><rect x="0" y="0" width="18" height="18" fill="#fff"/><text x="9" y="13" font-family="Liberation Mono" font-weight="700" font-size="10" text-anchor="middle" fill="#000">D</text></mask></defs><rect x="2.5" y="2.5" width="13.5" height="13.5" rx="1.6" fill="#fff" mask="url(#mD)"/></svg>
<div class="t" style="left:57.00px;top:476.14px;font-size:14px;color:#fff;font-weight:700;">Device profiles</div>
<div class="r" style="left:0px;top:544px;width:249px;height:1px;background:rgba(0,0,0,0.12);"></div>
<svg class="i" style="left:30.5px;top:515px;width:18px;height:18px" viewBox="0 0 18 18"><defs><mask id="mA"><rect x="0" y="0" width="18" height="18" fill="#fff"/><text x="9" y="13" font-family="Liberation Mono" font-weight="700" font-size="10" text-anchor="middle" fill="#000">A</text></mask></defs><rect x="2.5" y="2.5" width="13.5" height="13.5" rx="1.6" fill="#fff" mask="url(#mA)"/></svg>
<div class="t" style="left:57.00px;top:516.14px;font-size:14px;color:#fff;font-weight:700;">Asset profiles</div>
<div class="r" style="left:0px;top:585px;width:249px;height:1px;background:rgba(0,0,0,0.12);"></div>
<svg class="i" style="left:14.5px;top:556px;width:18px;height:18px;" viewBox="0 0 24 24"><path fill="#fff" stroke="#fff" stroke-width="0.4" d="M16.5 12c1.38 0 2.49-1.12 2.49-2.5S17.88 7 16.5 7C15.12 7 14 8.12 14 9.5s1.12 2.5 2.5 2.5zM9 11c1.66 0 2.99-1.34 2.99-3S10.66 5 9 5C7.34 5 6 6.34 6 8s1.34 3 3 3zm7.5 3c-1.83 0-5.5.92-5.5 2.75V19h11v-2.25c0-1.83-3.67-2.75-5.5-2.75zM9 13c-2.33 0-7 1.17-7 3.5V19h7v-2.25c0-.85.33-2.34 2.37-3.47C10.5 13.1 9.66 13 9 13z"/></svg>
<div class="t" style="left:41.00px;top:557.14px;font-size:14px;color:#fff;font-weight:700;">Customers</div>
<div class="r" style="left:0px;top:626px;width:249px;height:1px;background:rgba(0,0,0,0.12);"></div>
<svg class="i" style="left:14.5px;top:597px;width:18px;height:18px;" viewBox="0 0 24 24"><path fill="#fff" stroke="#fff" stroke-width="0.4" d="M12 2C6.48 2 2 6.48 2 12s4.48 10 10 10 10-4.48 10-10S17.52 2 12 2zm0 3c1.66 0 3 1.34 3 3s-1.34 3-3 3-3-1.34-3-3 1.34-3 3-3zm0 14.2c-2.5 0-4.71-1.28-6-3.22.03-1.99 4-3.08 6-3.08 1.99 0 5.97 1.09 6 3.08-1.29 1.94-3.5 3.22-6 3.22z"/></svg>
<div class="t" style="left:41.00px;top:598.14px;font-size:14px;color:#fff;font-weight:700;">Users</div>
<svg class="i" style="left:14.5px;top:638px;width:18px;height:18px;" viewBox="0 0 24 24"><path fill="#fff" stroke="#fff" stroke-width="0.4" d="M19 3h-4.18C14.4 1.84 13.3 1 12 1s-2.4.84-2.82 2H5c-1.1 0-2 .9-2 2v14c0 1.1.9 2 2 2h14c1.1 0 2-.9 2-2V5c0-1.1-.9-2-2-2zm-7-.25c.41 0 .75.34.75.75s-.34.75-.75.75-.75-.34-.75-.75.34-.75.75-.75zM11 14.17l-1.41 1.42L6 12l3.59-3.59L11 9.83 8.83 12 11 14.17zm3.41 1.42L13 14.17 15.17 12 13 9.83l1.41-1.42L18 12l-3.59 3.59z"/></svg>
<div class="t" style="left:41.00px;top:639.14px;font-size:14px;color:#fff;font-weight:700;">Integrations center</div>
<svg class="i" style="left:0;top:0;width:249px;height:821px" viewBox="0 0 249 821"><polyline points="220.5,648.6 226,643.2 231.5,648.6" fill="none" stroke="#fff" stroke-width="2.7" stroke-linecap="round" stroke-linejoin="round"/></svg>
<svg class="i" style="left:30.5px;top:678px;width:18px;height:18px;" viewBox="0 0 24 24"><path fill="#fff" stroke="#fff" stroke-width="0.4" d="M21 3.01H3c-1.1 0-2 .9-2 2V9h2V4.99h18v14.03H3V15H1v4.01c0 1.1.9 1.98 2 1.98h18c1.1 0 2-.88 2-1.98v-14c0-1.11-.9-2-2-2zM11 16l4-4-4-4v3H1v2h10v3z"/></svg>
<div class="t" style="left:57.00px;top:679.14px;font-size:14px;color:#fff;font-weight:700;">Integrations</div>
<div class="r" style="left:0px;top:747px;width:249px;height:1px;background:rgba(0,0,0,0.12);"></div>
<svg class="i" style="left:30.5px;top:718px;width:18px;height:18px;" viewBox="0 0 24 24"><path fill="#fff" stroke="#fff" stroke-width="0.4" d="M22 18v-2H8V4h2L7 1 4 4h2v2H2v2h4v8c0 1.1.9 2 2 2h8v2h-2l3 3 3-3h-2v-2h4zM10 8h6v6h2V8c0-1.1-.9-2-2-2h-6v2z"/></svg>
<div class="t" style="left:57.00px;top:719.14px;font-size:14px;color:#fff;font-weight:700;">Data converters</div>
<div class="r" style="left:0px;top:788px;width:249px;height:1px;background:rgba(0,0,0,0.12);"></div>
<svg class="i" style="left:14.5px;top:759px;width:18px;height:18px;" viewBox="0 0 24 24"><path fill="#fff" stroke="#fff" stroke-width="0.4" d="M7.77 6.76L6.23 5.48.82 12l5.41 6.52 1.54-1.28L3.42 12l4.35-5.24zM7 13h2v-2H7v2zm10-2h-2v2h2v-2zm-6 2h2v-2h-2v2zm6.77-7.52l-1.54 1.28L20.58 12l-4.35 5.24 1.54 1.28L23.18 12l-5.41-6.52z"/></svg>
<div class="t" style="left:41.00px;top:760.14px;font-size:14px;color:#fff;font-weight:700;">Rule chains</div>
<svg class="i" style="left:14.5px;top:800px;width:18px;height:18px;" viewBox="0 0 24 24"><path fill="#fff" stroke="#fff" stroke-width="0.4" d="M12 5c-3.87 0-7 3.13-7 7h2c0-2.76 2.24-5 5-5s5 2.24 5 5h2c0-3.87-3.13-7-7-7zm1 9.29c.88-.39 1.5-1.26 1.5-2.29 0-1.38-1.12-2.5-2.5-2.5S9.5 10.62 9.5 12c0 1.02.62 1.9 1.5 2.29v3.3L7.59 21 9 22.41l3-3 3 3L16.41 21 13 17.59v-3.3zM12 1C5.93 1 1 5.93 1 12h2c0-4.97 4.03-9 9-9s9 4.03 9 9h2c0-6.07-4.93-11-11-11z"/></svg>
<div class="t" style="left:41.00px;top:801.14px;font-size:14px;color:#fff;font-weight:700;">Edge management</div>
<svg class="i" style="left:0;top:0;width:249px;height:821px" viewBox="0 0 249 821"><polyline points="220.5,806.6 226,812.0 231.5,806.6" fill="none" stroke="#fff" stroke-width="2.7" stroke-linecap="round" stroke-linejoin="round"/></svg>
<svg class="i" style="left:0;top:0;width:1696px;height:821px" viewBox="0 0 1696 821">
<path fill="#f44f4f" d="M992 7.2 L1531.5 66.8 L1531 62.2 L1556.5 74.9 L1529.2 82.3 L1530.5 75.8 L991.8 9.2 Z"/>
</svg>
</body></html>
